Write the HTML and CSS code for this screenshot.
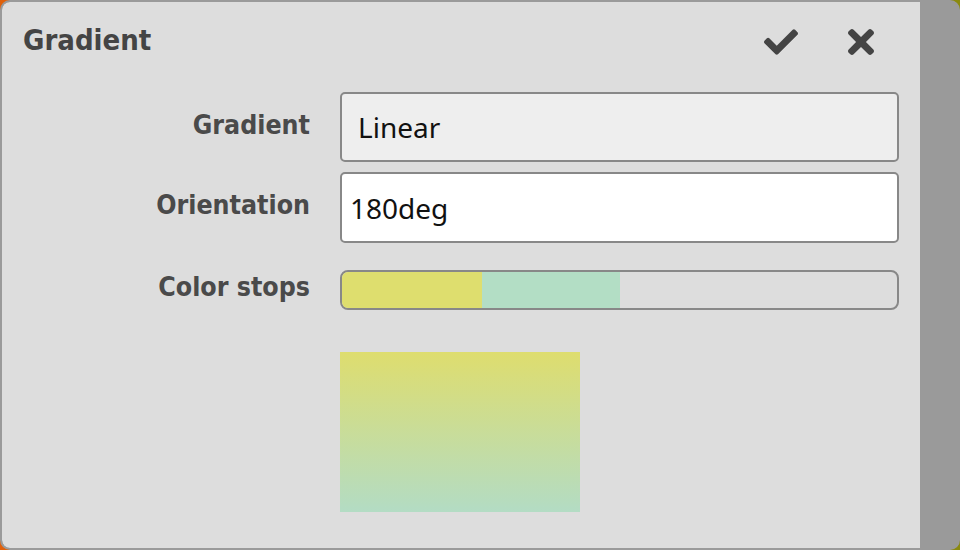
FILE: index.html
```html
<!DOCTYPE html>
<html>
<head>
<meta charset="utf-8">
<link rel="stylesheet" href="styles.css">
</head>
<body>
<div class="dialog">
  <div class="panel">
    <div class="header">
      <h1 class="title">Gradient</h1>
      <div class="actions">
        <button class="icon-btn ok" aria-label="OK">
          <svg width="34" height="34" viewBox="0 0 512 512"><path fill="#444" d="M173.898 439.404l-166.4-166.4c-9.997-9.997-9.997-26.206 0-36.204l36.203-36.204c9.997-9.998 26.207-9.998 36.204 0L192 312.69 432.095 72.596c9.997-9.997 26.207-9.997 36.204 0l36.203 36.204c9.997 9.997 9.997 26.206 0 36.204l-294.4 294.401c-9.998 9.997-26.207 9.997-36.204-.001z"/></svg>
        </button>
        <button class="icon-btn cancel" aria-label="Cancel">
          <svg width="26" height="38" viewBox="0 0 352 512"><path fill="#444" d="M242.72 256l100.07-100.07c12.28-12.28 12.28-32.19 0-44.48l-22.24-22.24c-12.28-12.28-32.19-12.28-44.48 0L176 189.28 75.93 89.21c-12.28-12.28-32.19-12.28-44.48 0L9.21 111.45c-12.28 12.28-12.28 32.19 0 44.48L109.28 256 9.21 356.07c-12.28 12.28-12.28 32.19 0 44.48l22.24 22.24c12.28 12.28 32.2 12.28 44.48 0L176 322.72l100.07 100.07c12.28 12.28 32.2 12.28 44.48 0l22.24-22.24c12.28-12.28 12.28-32.19 0-44.48L242.72 256z"/></svg>
        </button>
      </div>
    </div>
    <div class="form">
      <label class="label l1">Gradient</label>
      <div class="field select">Linear</div>
      <label class="label l2">Orientation</label>
      <div class="field text">180deg</div>
      <label class="label l3">Color stops</label>
      <div class="stops">
        <div class="stop stop-yellow"></div>
        <div class="stop stop-green"></div>
      </div>
      <div></div>
      <div class="preview"></div>
    </div>
  </div>
  <div class="sidebar"></div>
</div>
</body>
</html>
```

FILE: styles.css
```css
html, body {
  margin: 0;
  padding: 0;
}
body {
  width: 960px;
  height: 550px;
  background: linear-gradient(90deg, #e0600a, #8a8a10);
  font-family: "Noto Sans", sans-serif;
}
.dialog {
  box-sizing: border-box;
  width: 960px;
  height: 550px;
  border: 2px solid #9a9a9a;
  border-radius: 10px;
  background: #9a9a9a;
  overflow: hidden;
  display: flex;
}
.panel {
  flex: 1;
  background: #dddddd;
  border-radius: 8px 0 0 8px;
  padding-right: 21px;
}
.sidebar {
  width: 38px;
  background: #9a9a9a;
}
.header {
  display: flex;
  align-items: flex-start;
  justify-content: space-between;
  height: 90px;
}
.title {
  margin: 16px 0 0 21px;
  font-family: "DejaVu Sans Condensed", "DejaVu Sans", sans-serif;
  font-stretch: condensed;
  font-size: 29px;
  font-weight: 700;
  color: #444;
  line-height: 44px;
}
.actions {
  display: flex;
  margin-top: 19px;
  margin-right: 25px;
}
.icon-btn {
  border: 0;
  background: transparent;
  padding: 0;
  display: block;
}
.icon-btn.ok {
  margin-top: 4px;
  height: 34px;
  margin-right: 50px;
}
.icon-btn.cancel {
  margin-top: 2px;
  height: 38px;
}
.icon-btn svg {
  display: block;
}
.form {
  display: grid;
  grid-template-columns: 308px 559px;
  column-gap: 30px;
  align-items: start;
}
.label {
  text-align: right;
  font-family: "DejaVu Sans Condensed", "DejaVu Sans", sans-serif;
  font-stretch: condensed;
  font-size: 26.5px;
  font-weight: 700;
  color: #4a4a4a;
  line-height: 36px;
}
.l1 { margin-top: 15px; }
.l2 { margin-top: 25px; }
.l3 { margin-top: 26px; }
.field {
  box-sizing: border-box;
  height: 70px;
  border: 2px solid #888;
  border-radius: 5px;
  font-size: 28px;
  color: #111;
  display: flex;
  align-items: center;
  line-height: 1;
}
.select {
  background: #eeeeee;
  padding-left: 16px;
}
.text {
  background: #ffffff;
  padding-left: 8px;
  margin-top: 10px;
  height: 71px;
}
.stops {
  box-sizing: border-box;
  height: 40px;
  margin-top: 27px;
  border: 2px solid #888;
  border-radius: 8px;
  overflow: hidden;
  display: flex;
  background: #dddddd;
}
.stop-yellow {
  width: 140px;
  background: #dede6e;
}
.stop-green {
  width: 138px;
  background: #b3dec5;
}
.preview {
  margin-top: 42px;
  width: 240px;
  height: 160px;
  background: linear-gradient(180deg, #dedd6e, #b3dcc4);
}
```
